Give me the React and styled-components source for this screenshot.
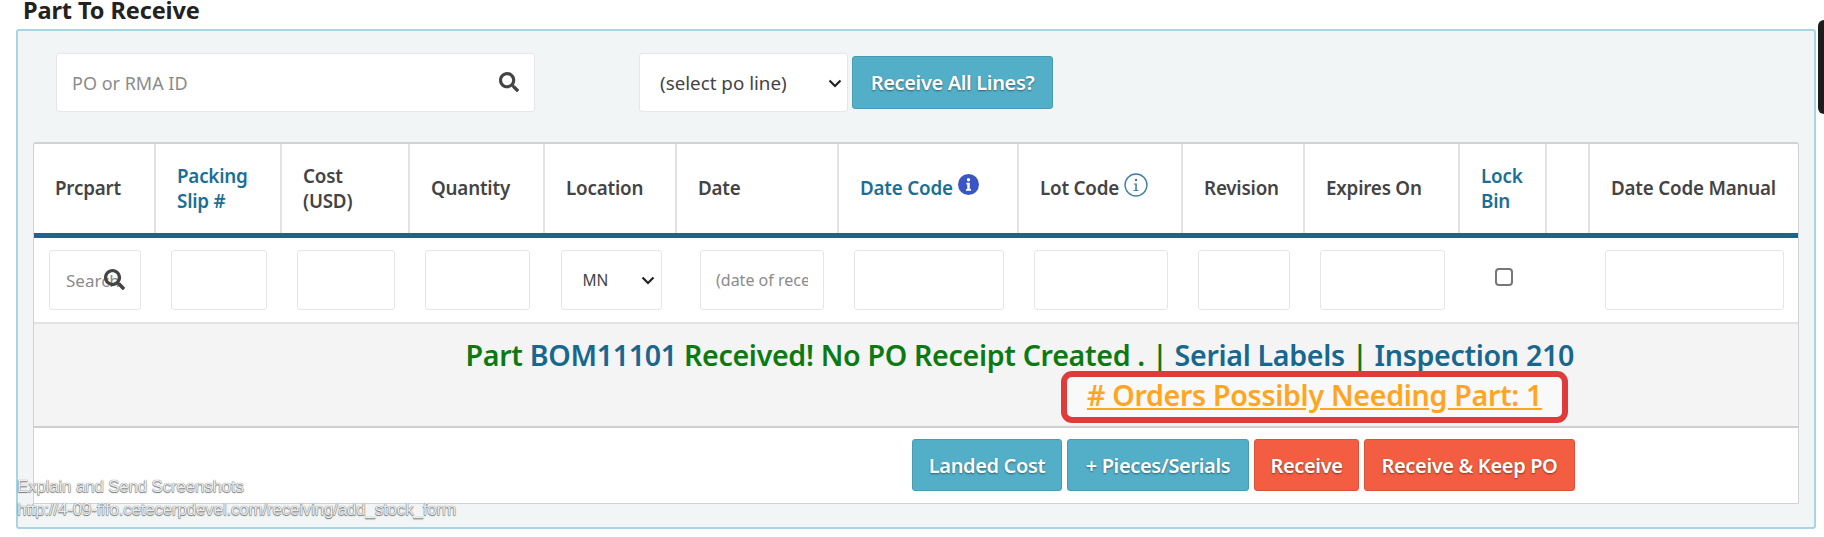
import React from "react";
import styled, { createGlobalStyle } from "styled-components";
import { FaSearch } from "react-icons/fa";

const GlobalStyle = createGlobalStyle`
  html, body {
    margin: 0;
    padding: 0;
    background: #fff;
  }
  * {
    box-sizing: border-box;
  }
`;

const FONT = `"Noto Sans", "Open Sans", sans-serif`;

const Page = styled.div`
  position: relative;
  width: 1824px;
  height: 537px;
  overflow: hidden;
  font-family: ${FONT};
  color: #444;
`;

const Title = styled.h3`
  height: 29px;
  margin: 0 0 0 23px;
  font-size: 23.5px;
  line-height: 21px;
  font-weight: 700;
  letter-spacing: -0.1px;
  color: #222;
`;

const Panel = styled.div`
  width: 1800px;
  height: 500px;
  margin-left: 16px;
  padding: 22px 14px 0 15px;
  background: #f1f5f6;
  border: 2px solid #a9d5e2;
  border-radius: 3px;
`;

const SearchBar = styled.div`
  display: flex;
  align-items: center;
  height: 59px;
  margin: 0 0 30px 23px;
`;

const FieldWrap = styled.div`
  position: relative;
  flex: none;
  width: ${(p) => p.$width}px;
  height: ${(p) => p.$height}px;
  margin-left: ${(p) => p.$left || 0}px;
`;

const TextInput = styled.input`
  width: 100%;
  height: 100%;
  padding: 0 ${(p) => p.$padRight || 8}px 0 ${(p) => p.$padLeft || 15}px;
  background: #fff;
  border: 1px solid #e6e6e6;
  border-radius: 3px;
  font-family: ${FONT};
  font-size: ${(p) => p.$size || 18}px;
  color: #555;
  outline: none;

  &::placeholder {
    color: #8b8b8b;
    opacity: 1;
  }
`;

const SearchIcon = styled(FaSearch)`
  position: absolute;
  top: ${(p) => p.$top}px;
  left: ${(p) => p.$left}px;
  font-size: ${(p) => p.$size}px;
  color: #444;
`;

const Select = styled.select`
  width: 100%;
  height: 100%;
  padding-left: ${(p) => p.$padLeft}px;
  appearance: none;
  background: #fff;
  border: 1px solid #e6e6e6;
  border-radius: 3px;
  font-family: ${FONT};
  font-size: ${(p) => p.$size}px;
  color: #444;
  outline: none;
`;

const Chevron = styled.svg`
  position: absolute;
  top: 50%;
  right: ${(p) => p.$right}px;
  width: 14px;
  height: 9px;
  margin-top: -4px;
  fill: none;
  stroke: #222;
  stroke-width: 2.2;
  pointer-events: none;
`;

const Button = styled.button`
  flex: none;
  width: ${(p) => p.$width}px;
  height: ${(p) => p.$height || 52}px;
  margin-left: ${(p) => p.$left || 0}px;
  padding: 0;
  border: 1px solid ${(p) => (p.$tone === "danger" ? "#dc5238" : "#479cb3")};
  border-radius: 3px;
  background: ${(p) => (p.$tone === "danger" ? "#f35e42" : "#53afc8")};
  color: #fff;
  font-family: ${FONT};
  font-size: 20px;
  font-weight: 600;
  letter-spacing: -0.35px;
  text-shadow: 0 1px 2px rgba(0, 0, 0, 0.45);
`;

const Table = styled.div`
  width: 1766px;
  height: 362px;
  background: #fff;
  border: 1px solid #d2d2d2;
  border-top-width: 2px;
  border-radius: 3px 3px 0 0;
`;

const COLUMNS = "122px 126px 128px 135px 132px 162px 180px 164px 122px 155px 87px 43px 209px";

const HeadRow = styled.div`
  display: grid;
  grid-template-columns: ${COLUMNS};
  height: 94px;
  border-bottom: 5px solid #1b6588;
`;

const HeadCell = styled.div`
  display: flex;
  align-items: center;
  padding-left: 21px;
  border-right: 2px solid #e2e2e2;
  font-size: 18.8px;
  line-height: 25px;
  font-weight: 600;
  letter-spacing: -0.2px;
  color: ${(p) => (p.$link ? "#1b6f96" : "#444")};

  &:last-child {
    border-right: none;
  }
`;

const InfoSvg = styled.svg`
  flex: none;
  width: ${(p) => p.$size}px;
  height: ${(p) => p.$size}px;
  margin: -8px 0 0 5px;
`;

const InputRow = styled.div`
  display: grid;
  grid-template-columns: ${COLUMNS};
  align-items: center;
  height: 86px;
  padding: 12px 0 12px;
  border-bottom: 2px solid #e2e2e2;
`;

const InputCell = styled.div`
  display: flex;
  justify-content: center;
  align-items: center;
  height: 60px;
  padding: 0 15px 0 ${(p) => p.$left || 15}px;
`;

const Checkbox = styled.input`
  width: 18px;
  height: 18px;
  margin: 0 0 6px;
  appearance: none;
  background: #fff;
  border: 2px solid #777;
  border-radius: 4px;
`;

const MessageRow = styled.div`
  height: 104px;
  padding: 11px 224px 0 0;
  background: #f4f4f4;
  border-bottom: 2px solid #cfcfcf;
  text-align: right;
`;

const MessageLine = styled.div`
  height: 36px;
  font-size: 28.6px;
  line-height: 40px;
  font-weight: 600;
  letter-spacing: -0.32px;
  color: #0b7a12;
  white-space: nowrap;
`;

const MessageLink = styled.span`
  color: #17678f;
`;

const OrdersBox = styled.div`
  display: inline-flex;
  align-items: center;
  justify-content: center;
  width: 507px;
  height: 52px;
  margin-right: 6px;
  padding-bottom: 5px;
  background: #f9f9f9;
  border: 6px solid #e03b3b;
  border-radius: 11px;
  font-size: 28.6px;
  font-weight: 600;
  letter-spacing: -0.3px;
  color: #ffa51f;
  text-decoration: underline;
`;

const ActionRow = styled.div`
  display: flex;
  align-items: flex-start;
  height: 76px;
  padding: 11px 0 0 878px;
`;

const Caption = styled.div`
  position: absolute;
  left: 17px;
  top: ${(p) => p.$top}px;
  font-family: "Liberation Sans", Arial, sans-serif;
  font-size: 17px;
  letter-spacing: -0.2px;
  color: #ececec;
  text-shadow: 0 0 1px #555, 0 1px 1px #777;
  white-space: nowrap;
`;

const EdgeTab = styled.div`
  position: absolute;
  top: 20px;
  right: 0;
  width: 6px;
  height: 94px;
  background: #1c1c1c;
  border-radius: 6px 0 0 6px;
`;

const FilledInfo = () => (
  <InfoSvg $size={21} viewBox="0 0 20 20">
    <circle cx="10" cy="10" r="10" fill="#3a56c6" />
    <circle cx="10" cy="5.5" r="1.6" fill="#fff" />
    <path d="M8 8.4h3.2v6h1.2V16H7.6v-1.6h1.2V10H8z" fill="#fff" />
  </InfoSvg>
);

const OutlineInfo = () => (
  <InfoSvg $size={24} viewBox="0 0 23 23">
    <circle cx="11.5" cy="11.5" r="10.5" fill="none" stroke="#3b7fa6" strokeWidth="1.3" />
    <circle cx="11.5" cy="6.8" r="1.2" fill="#3b7fa6" />
    <path d="M9.4 10h2.9v6.2h1.4v1H9.2v-1h1.6V11H9.4z" fill="#3b7fa6" />
  </InfoSvg>
);

const SelectField = ({ width, height, left, padLeft, size, arrowRight, children }) => (
  <FieldWrap $width={width} $height={height} $left={left}>
    <Select $padLeft={padLeft} $size={size}>
      <option>{children}</option>
    </Select>
    <Chevron $right={arrowRight} viewBox="0 0 14 9">
      <path d="M1.5 1.5 7 7l5.5-5.5" />
    </Chevron>
  </FieldWrap>
);

export default function App() {
  return (
    <Page>
      <GlobalStyle />
      <Title>Part To Receive</Title>
      <Panel>
        <SearchBar>
          <FieldWrap $width={479} $height={59}>
            <TextInput placeholder="PO or RMA ID" $padLeft={15} $size={18} />
            <SearchIcon $top={19} $left={443} $size={20} />
          </FieldWrap>
          <SelectField width={209} height={59} left={104} padLeft={20} size={18.8} arrowRight={6}>
            (select po line)
          </SelectField>
          <Button $width={201} $height={53} $left={4}>
            Receive All Lines?
          </Button>
        </SearchBar>

        <Table>
          <HeadRow>
            <HeadCell>Prcpart</HeadCell>
            <HeadCell $link>
              Packing
              <br />
              Slip #
            </HeadCell>
            <HeadCell>
              Cost
              <br />
              (USD)
            </HeadCell>
            <HeadCell>Quantity</HeadCell>
            <HeadCell>Location</HeadCell>
            <HeadCell>Date</HeadCell>
            <HeadCell $link>
              Date Code
              <FilledInfo />
            </HeadCell>
            <HeadCell>
              Lot Code
              <OutlineInfo />
            </HeadCell>
            <HeadCell>Revision</HeadCell>
            <HeadCell>Expires On</HeadCell>
            <HeadCell $link>
              Lock
              <br />
              Bin
            </HeadCell>
            <HeadCell />
            <HeadCell>Date Code Manual</HeadCell>
          </HeadRow>

          <InputRow>
            <InputCell>
              <FieldWrap $width={92} $height={60}>
                <TextInput placeholder="Search" $padLeft={16} $padRight={6} $size={17} />
                <SearchIcon $top={19} $left={55} $size={21} />
              </FieldWrap>
            </InputCell>
            <InputCell>
              <TextInput />
            </InputCell>
            <InputCell>
              <TextInput />
            </InputCell>
            <InputCell>
              <TextInput />
            </InputCell>
            <InputCell>
              <SelectField width={101} height={60} padLeft={21} size={15.5} arrowRight={7}>
                MN
              </SelectField>
            </InputCell>
            <InputCell $left={23}>
              <TextInput placeholder="(date of receipt)" $padRight={15} $size={16} />
            </InputCell>
            <InputCell>
              <TextInput />
            </InputCell>
            <InputCell>
              <TextInput />
            </InputCell>
            <InputCell>
              <TextInput />
            </InputCell>
            <InputCell>
              <TextInput />
            </InputCell>
            <InputCell>
              <Checkbox type="checkbox" />
            </InputCell>
            <InputCell />
            <InputCell>
              <TextInput />
            </InputCell>
          </InputRow>

          <MessageRow>
            <MessageLine>
              Part <MessageLink>BOM11101</MessageLink> Received! No PO Receipt Created . |{" "}
              <MessageLink>Serial Labels</MessageLink> | <MessageLink>Inspection 210</MessageLink>
            </MessageLine>
            <OrdersBox># Orders Possibly Needing Part: 1</OrdersBox>
          </MessageRow>

          <ActionRow>
            <Button $width={150}>Landed Cost</Button>
            <Button $width={182} $left={5}>
              + Pieces/Serials
            </Button>
            <Button $width={105} $left={5} $tone="danger">
              Receive
            </Button>
            <Button $width={211} $left={5} $tone="danger">
              Receive &amp; Keep PO
            </Button>
          </ActionRow>
        </Table>
      </Panel>

      <Caption $top={477}>Explain and Send Screenshots</Caption>
      <Caption $top={500}>http://4-09-fifo.cetecerpdevel.com/receiving/add_stock_form</Caption>
      <EdgeTab />
    </Page>
  );
}
